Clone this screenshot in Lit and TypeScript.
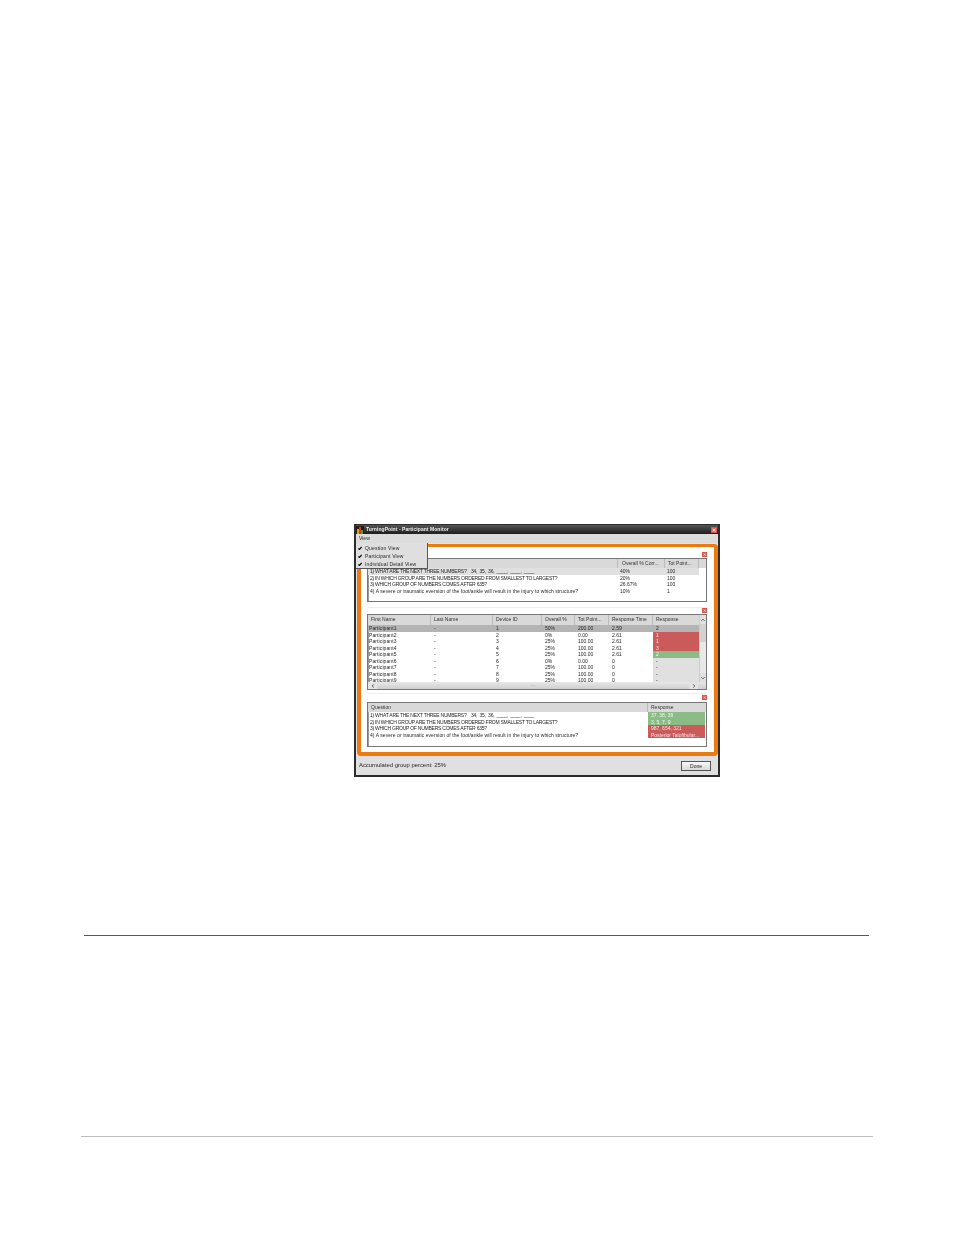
import { LitElement, html, css } from "lit";
import { customElement } from "lit/decorators.js";

const Q = [
  "1) WHAT ARE THE NEXT THREE NUMBERS?    34,  35,  36,  ____,  ____,  ____",
  "2) IN WHICH GROUP ARE THE NUMBERS ORDERED FROM SMALLEST TO LARGEST?",
  "3) WHICH GROUP OF NUMBERS COMES AFTER 635?",
  "4) A severe or traumatic eversion of the foot/ankle will result in the injury to which structure?",
];
const Q1 = [["40%", "100"], ["20%", "100"], ["26.67%", "100"], ["10%", "1"]];
const P = [
  ["Participant1", "-", "1", "50%", "200.00", "2.59", "2", ""],
  ["Participant2", "-", "2", "0%", "0.00", "2.61", "1", "r"],
  ["Participant3", "-", "3", "25%", "100.00", "2.61", "1", "r"],
  ["Participant4", "-", "4", "25%", "100.00", "2.61", "3", "r"],
  ["Participant5", "-", "5", "25%", "100.00", "2.61", "2", "g"],
  ["Participant6", "-", "6", "0%", "0.00", "0", "-", ""],
  ["Participant7", "-", "7", "25%", "100.00", "0", "-", ""],
  ["Participant8", "-", "8", "25%", "100.00", "0", "-", ""],
  ["Participant9", "-", "9", "25%", "100.00", "0", "-", ""],
];
const A = [["37, 38, 39", "g"], ["3, 5, 7, 9", "g"], ["987, 654, 321", "r"], ["Posterior Talofibular...", "r"]];

const close = html`<div class="closerow"><span class="x">✕</span></div>`;
const chevUp = html`<svg class="chev" viewBox="0 0 5 4"><path d="M0.5 3 L2.5 1 L4.5 3" fill="none" stroke="#333" stroke-width="1"/></svg>`;
const chevDown = html`<svg class="chev" viewBox="0 0 5 4"><path d="M0.5 1 L2.5 3 L4.5 1" fill="none" stroke="#333" stroke-width="1"/></svg>`;
const chevLeft = html`<svg class="chev" viewBox="0 0 4 5"><path d="M3 0.5 L1 2.5 L3 4.5" fill="none" stroke="#333" stroke-width="1"/></svg>`;
const chevRight = html`<svg class="chev" viewBox="0 0 4 5"><path d="M1 0.5 L3 2.5 L1 4.5" fill="none" stroke="#333" stroke-width="1"/></svg>`;

@customElement("app-root")
export class AppRoot extends LitElement {
  static styles = css`
    :host { display: block; background: #fff; height: 1235px; overflow: hidden; font-family: "Liberation Sans", Arial, sans-serif; }
    .page { display: flex; flex-direction: column; padding-top: 524px; }
    .win { position: relative; margin-left: 354px; width: 366px; height: 253px; box-sizing: border-box; border: 2px solid #2c2c2c; border-top-width: 1px; background: #e2e2e2; display: flex; flex-direction: column; color: #262626; font-size: 5px; line-height: 6.5px; white-space: nowrap; filter: blur(0.3px); }
    .title { height: 9px; background: linear-gradient(#555, #1e1e1e); color: #eee; font-weight: bold; letter-spacing: 0.06px; display: flex; align-items: center; gap: 2px; flex: none; padding-right: 1px; }
    .title .t { flex: 1; }
    .ico { width: 8px; height: 8px; }
    .wx { width: 6px; height: 6px; background: #d9574a; color: #fff; font-size: 5px; line-height: 6px; text-align: center; font-weight: bold; }
    .menubar { height: 9px; background: #dcdcdc; padding-left: 3px; line-height: 9px; flex: none; }
    .menu { position: absolute; left: 0; top: 18px; width: 72px; height: 26px; background: #dfdfdf; border-right: 1px solid #555; border-bottom: 1px solid #555; padding-top: 1px; box-sizing: border-box; z-index: 2; letter-spacing: 0.18px; }
    .mi { display: flex; align-items: center; height: 8px; gap: 3px; padding-left: 2px; }
    .mi svg { width: 4px; height: 4px; flex: none; }
    .frame { height: 212px; margin: 1px 0 0 1px; box-sizing: border-box; border: 4px solid #ec7a0e; border-top-width: 3px; border-radius: 4px; background: #fff; padding: 5px 7px 0 6px; flex: none; }
    .closerow { height: 6px; display: flex; justify-content: flex-end; }
    .x { width: 5px; height: 5px; background: #d9574a; color: #fff; font-size: 4px; line-height: 5px; text-align: center; }
    .panel { border: 1px solid #777; box-shadow: inset 1px 1px 0 #999; background: #fff; overflow: hidden; box-sizing: border-box; }
    .p1 { height: 44px; }
    .p2 { height: 76px; display: flex; flex-direction: column; }
    .p2 .h { height: 10px; line-height: 9px; }
    .p3 { height: 45px; margin-top: 1px; }
    .sep { height: 1px; background: #eee; }
    .g1 { display: grid; grid-template-columns: 250px 47px 34px 7px; }
    .g2 { display: grid; grid-template-columns: 63px 62px 49px 33px 34px 44px 46px; }
    .g3 { display: grid; grid-template-columns: 280px 57px; }
    .h { height: 9px; line-height: 9px; background: #d9d9d9; color: #333; }
    .h > span { padding-left: 3px; border-right: 1px solid #bbb; overflow: hidden; }
    .h > span:last-child { border-right: 0; }
    .g1.h > span:nth-child(2) { padding-left: 4px; }
    .r { height: 6.5px; }
    .r > span { padding-left: 2px; overflow: hidden; white-space: pre; }
    .caps > span:first-child { letter-spacing: -0.24px; }
    .lower > span:first-child { letter-spacing: 0.06px; }
    .sel { background: #e0e0e0; }
    .sel > span:last-child { background: #fff; }
    .p2main { flex: 1; min-height: 0; display: flex; }
    .tbl { width: 331px; overflow: hidden; flex: none; }
    .rows { height: 57px; overflow: hidden; }
    .g2 > span { padding-left: 3px; }
    .g2.r > span:first-child { padding-left: 1px; letter-spacing: 0.1px; }
    .on { background: #b4b4b4; }
    .resp { background: #e0e0e0; }
    .on .resp { background: #b4b4b4; }
    .resp.red { background: #cb5a5a; color: #f4e4e4; }
    .resp.grn { background: #8cbc85; color: #f2f8f0; }
    .g3 .resp { padding-left: 3px; }
    .vs { flex: 1; background: #e8e8e8; border-left: 1px solid #ccc; display: flex; flex-direction: column; align-items: center; }
    .vbtn { height: 9px; width: 100%; background: #e0e0e0; display: flex; align-items: center; justify-content: center; flex: none; }
    .thumb { width: 6px; height: 18px; background: #d2d2d2; flex: none; }
    .gap { flex: 1; }
    .chev { width: 4px; height: 4px; }
    .hs { height: 7px; background: linear-gradient(#e8e8e8, #cfcfcf); display: flex; align-items: center; flex: none; }
    .hbtn { width: 9px; height: 7px; display: flex; align-items: center; justify-content: center; background: #e4e4e4; flex: none; }
    .hgrip { flex: 1; text-align: center; line-height: 7px; font-size: 4px; color: #777; }
    .hcorner { width: 8px; flex: none; }
    .status { flex: 1; display: flex; align-items: center; justify-content: space-between; padding: 0 7px 0 3px; background: #e0e0e0; }
    .st { font-size: 5.9px; }
    .done { width: 30px; height: 10px; box-sizing: border-box; border: 1px solid #555; background: linear-gradient(#f8f8f8, #d8d8d8); text-align: center; line-height: 8px; }
    .l1 { height: 1px; background: #1f7d2b; margin: 158px 85px 0 84px; }
    .l2 { height: 1px; background: #bdbdbd; margin: 200px 81px 0 81px; }
  `;

  render() {
    return html`<div class="page">
      <div class="win">
        <div class="title">
          <svg class="ico" viewBox="0 0 8 8"><rect width="8" height="8" fill="#2a1c0c"/><rect x="1" y="3" width="2" height="5" fill="#e8a020"/><rect x="3" y="1" width="2" height="7" fill="#d03a20"/><rect x="5" y="4" width="2" height="4" fill="#4f9a3a"/></svg>
          <span class="t">TurningPoint - Participant Monitor</span>
          <span class="wx">✕</span>
        </div>
        <div class="menubar">View</div>
        <div class="menu">
          ${["Question View", "Participant View", "Individual Detail View"].map(
            (m) => html`<div class="mi"><svg viewBox="0 0 4 4"><path d="M0.4 2.4 L1.4 3.5 L3.6 1" fill="none" stroke="#111" stroke-width="1.2"/></svg><span>${m}</span></div>`
          )}
        </div>
        <div class="frame">
          ${close}
          <div class="panel p1">
            <div class="g1 h"><span>Question</span><span>Overall % Corr...</span><span>Tot Point...</span><span></span></div>
            ${Q.map((q, i) => html`<div class="g1 r ${i === 0 ? "sel" : ""} ${i < 3 ? "caps" : "lower"}"><span>${q}</span><span>${Q1[i][0]}</span><span>${Q1[i][1]}</span><span></span></div>`)}
          </div>
          <div class="sep" style="margin-top:5px"></div>
          ${close}
          <div class="panel p2">
            <div class="p2main">
              <div class="tbl">
                <div class="g2 h">${["First Name", "Last Name", "Device ID", "Overall %", "Tot Point...", "Response Time", "Response"].map((c) => html`<span>${c}</span>`)}</div>
                <div class="rows">
                  ${P.map((p, i) => html`<div class="g2 r ${i === 0 ? "on" : ""}">
                    ${p.slice(0, 6).map((c) => html`<span>${c}</span>`)}
                    <span class="resp ${p[7] === "r" ? "red" : p[7] === "g" ? "grn" : ""}">${p[6]}</span>
                  </div>`)}
                </div>
              </div>
              <div class="vs"><span class="vbtn">${chevUp}</span><span class="thumb"></span><span class="gap"></span><span class="vbtn">${chevDown}</span></div>
            </div>
            <div class="hs"><span class="hbtn">${chevLeft}</span><span class="hgrip">···</span><span class="hbtn">${chevRight}</span><span class="hcorner"></span></div>
          </div>
          <div class="sep" style="margin-top:3px"></div>
          <div style="height:1px"></div>
          ${close}
          <div class="panel p3">
            <div class="g3 h"><span>Question</span><span>Response</span></div>
            ${Q.map((q, i) => html`<div class="g3 r ${i < 3 ? "caps" : "lower"}"><span>${q}</span><span class="resp ${A[i][1] === "r" ? "red" : "grn"}">${A[i][0]}</span></div>`)}
          </div>
        </div>
        <div class="status"><span class="st">Accumulated group percent: 25%</span><span class="done">Done</span></div>
      </div>
      <div class="l1"></div>
      <div class="l2"></div>
    </div>`;
  }
}
